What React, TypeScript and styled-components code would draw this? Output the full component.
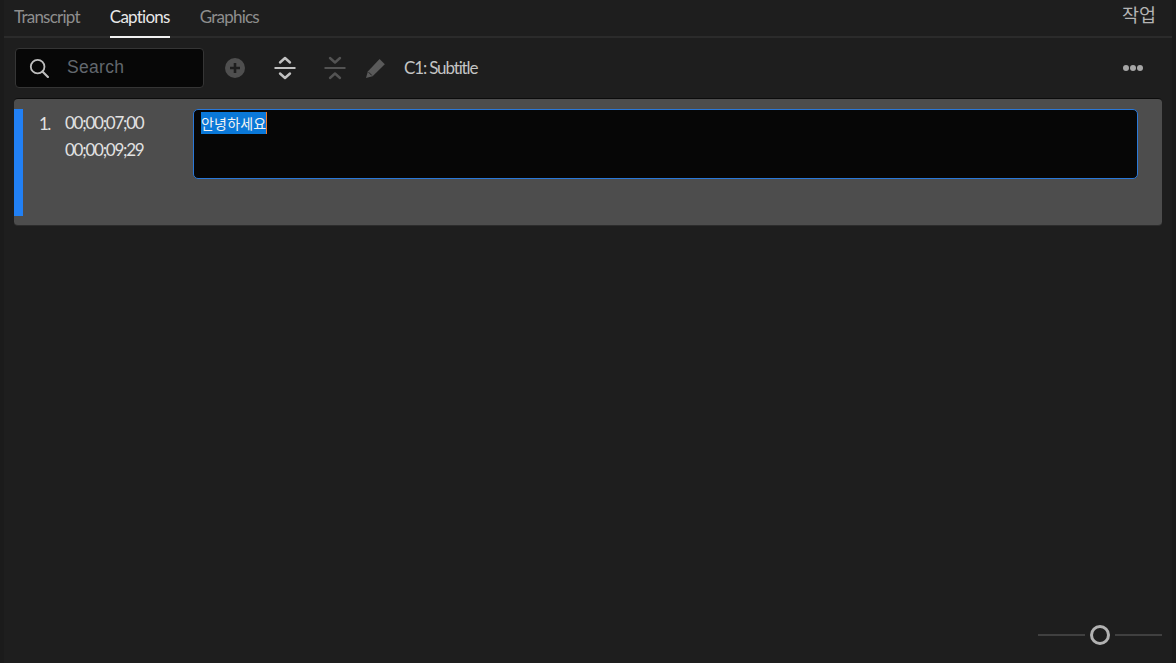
import React from 'react';
import styled, { createGlobalStyle } from 'styled-components';

const GlobalStyle = createGlobalStyle`
  html, body {
    margin: 0;
    padding: 0;
    background: #1e1e1e;
  }
  * {
    box-sizing: border-box;
  }
`;

const Panel = styled.div`
  width: 1176px;
  height: 663px;
  display: flex;
  flex-direction: column;
  position: relative;
  overflow: hidden;
  background: #1e1e1e;
  border-left: 4px solid #1b1b1b;
  border-right: 4px solid #1b1b1b;
  font-family: Lato, 'Noto Sans', sans-serif;
`;

const TabBar = styled.div`
  height: 38px;
  flex: none;
  display: flex;
  align-items: stretch;
  justify-content: space-between;
  padding: 0 16px 0 10px;
  border-bottom: 2px solid #2b2b2b;
`;

const Tabs = styled.div`
  display: flex;
  gap: 30px;
`;

const Tab = styled.div<{ $active?: boolean }>`
  height: 38px;
  padding-top: 7px;
  font-size: 17px;
  line-height: 20px;
  letter-spacing: -0.76px;
  color: ${({ $active }) => ($active ? '#e8e8e8' : '#8e8e8e')};
  border-bottom: 2px solid ${({ $active }) => ($active ? '#f0f0f0' : 'transparent')};
`;

const WorkLabel = styled.div`
  padding-top: 4px;
  font-family: 'Noto Sans CJK KR', sans-serif;
  font-size: 18.5px;
  line-height: 20px;
  color: #b4b4b4;
`;

const Toolbar = styled.div`
  height: 60px;
  flex: none;
  display: flex;
  align-items: center;
  padding: 0 29px 0 11px;
`;

const SearchBox = styled.div`
  width: 189px;
  height: 40px;
  flex: none;
  display: flex;
  align-items: center;
  gap: 18px;
  padding-left: 13px;
  margin-right: 20px;
  background: #070707;
  border: 1px solid #353535;
  border-radius: 4px;
`;

const SearchText = styled.span`
  padding-bottom: 2px;
  font-family: 'Liberation Sans', Arial, sans-serif;
  font-size: 17.5px;
  letter-spacing: 0.3px;
  color: #62676e;
`;

const IconSlot = styled.div<{ $w: number; $mr: number }>`
  width: ${({ $w }) => $w}px;
  height: 30px;
  flex: none;
  margin-right: ${({ $mr }) => $mr}px;
  display: flex;
  align-items: center;
  justify-content: center;
`;

const TrackName = styled.div`
  padding-bottom: 1px;
  font-size: 17px;
  letter-spacing: -1.15px;
  color: #c4c4c4;
`;

const More = styled.div`
  margin-left: auto;
  display: flex;
  gap: 1px;
`;

const Dot = styled.span`
  width: 6px;
  height: 6px;
  border-radius: 50%;
  background: #a6a6a6;
`;

const List = styled.div`
  flex: 1;
  padding: 0 10px;
`;

const Row = styled.div`
  height: 128px;
  display: flex;
  padding: 10px 24px 9px 0;
  background: #4d4d4d;
  border-top: 1px solid #0c0c0c;
  border-bottom: 1px solid #2c2c2c;
  border-radius: 4px;
`;

const Marker = styled.div`
  width: 9px;
  flex: none;
  background: #2180f5;
`;

const Index = styled.div`
  width: 34px;
  padding: 5px 0 0 16px;
  flex: none;
  font-size: 17px;
  line-height: 20px;
  letter-spacing: -1.6px;
  color: #e2e2e2;
`;

const Times = styled.div`
  width: 136px;
  flex: none;
  padding: 1px 0 0 8px;
  font-size: 17px;
  line-height: 26.5px;
  letter-spacing: -1.25px;
  color: #e2e2e2;
`;

const Editor = styled.div`
  flex: 1;
  height: 70px;
  padding: 2px 7px;
  background: #060606;
  border: 1px solid #2a78d8;
  border-radius: 5px;
`;

const Selected = styled.span`
  display: inline-block;
  height: 22px;
  width: 66px;
  overflow: hidden;
  white-space: nowrap;
  font-family: 'Noto Sans CJK KR', sans-serif;
  font-size: 14px;
  line-height: 22px;
  letter-spacing: 0.2px;
  color: #f2f2f2;
  background: #0a78d8;
  border-right: 1px solid #f07a2c;
`;

const Zoom = styled.div`
  position: absolute;
  right: 10px;
  bottom: 18px;
  display: flex;
  align-items: center;
  gap: 5px;
`;

const ZoomLine = styled.span<{ $w: number }>`
  width: ${({ $w }) => $w}px;
  height: 2px;
  background: #404040;
`;

const ZoomKnob = styled.span`
  width: 20px;
  height: 20px;
  border: 3px solid #b2b2b2;
  border-radius: 50%;
`;

const SearchIcon = () => (
  <svg width="20" height="20" viewBox="0 0 22 22" fill="none" stroke="#bdbdbd">
    <circle cx="9.5" cy="9.5" r="7.5" strokeWidth="2" />
    <path d="M14.8 14.8L20.8 20.8" strokeWidth="2.4" strokeLinecap="round" />
  </svg>
);

const PlusIcon = () => (
  <svg width="20" height="20" viewBox="0 0 20 20">
    <circle cx="10" cy="10" r="10" fill="#4f4f4f" />
    <path d="M10 5v10M5 10h10" stroke="#1e1e1e" strokeWidth="2.6" />
  </svg>
);

const ExpandIcon = () => (
  <svg width="24" height="24" viewBox="0 0 24 24" fill="none" stroke="#c2c2c2" strokeWidth="2.4" strokeLinecap="round" strokeLinejoin="round">
    <path d="M7 6.5L12 2l5 4.5" />
    <path d="M1.5 12h21" strokeWidth="2" strokeLinecap="butt" />
    <path d="M7 17.5L12 22l5-4.5" />
  </svg>
);

const CollapseIcon = () => (
  <svg width="24" height="24" viewBox="0 0 24 24" fill="none" stroke="#535353" strokeWidth="2.4" strokeLinecap="round" strokeLinejoin="round">
    <path d="M7 2l5 4.5L17 2" />
    <path d="M1.5 12h21" strokeWidth="2" strokeLinecap="butt" />
    <path d="M7 22l5-4.5 5 4.5" />
  </svg>
);

const PencilIcon = () => (
  <svg width="21" height="21" viewBox="0 0 21 21">
    <path d="M14.6 1l5.2 5.2L7.6 18.2 1 20l1.8-6.6z" fill="#5a5a5a" />
    <path d="M3.6 14.2l3.2 3.2" stroke="#1e1e1e" strokeWidth="1" />
  </svg>
);

const App = () => (
  <>
    <GlobalStyle />
    <Panel>
      <TabBar>
        <Tabs>
          <Tab>Transcript</Tab>
          <Tab $active>Captions</Tab>
          <Tab>Graphics</Tab>
        </Tabs>
        <WorkLabel>작업</WorkLabel>
      </TabBar>
      <Toolbar>
        <SearchBox>
          <SearchIcon />
          <SearchText>Search</SearchText>
        </SearchBox>
        <IconSlot $w={22} $mr={27}>
          <PlusIcon />
        </IconSlot>
        <IconSlot $w={24} $mr={26}>
          <ExpandIcon />
        </IconSlot>
        <IconSlot $w={24} $mr={18}>
          <CollapseIcon />
        </IconSlot>
        <IconSlot $w={21} $mr={18}>
          <PencilIcon />
        </IconSlot>
        <TrackName>C1: Subtitle</TrackName>
        <More>
          <Dot />
          <Dot />
          <Dot />
        </More>
      </Toolbar>
      <List>
        <Row>
          <Marker />
          <Index>1.</Index>
          <Times>
            <div>00;00;07;00</div>
            <div>00;00;09;29</div>
          </Times>
          <Editor>
            <Selected>안녕하세요</Selected>
          </Editor>
        </Row>
      </List>
      <Zoom>
        <ZoomLine $w={47} />
        <ZoomKnob />
        <ZoomLine $w={47} />
      </Zoom>
    </Panel>
  </>
);

export default App;
